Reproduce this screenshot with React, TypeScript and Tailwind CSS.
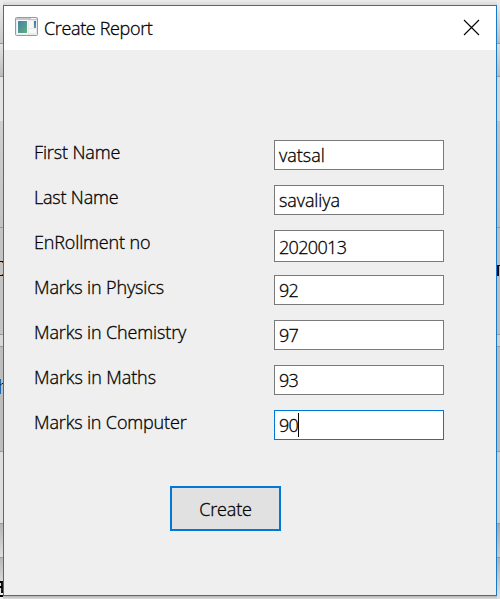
import React from 'react';

type Field = {
  label: string;
  value: string;
  labelClass: string;
  valueClass: string;
  boxClass: string;
};

const fields: Field[] = [
  { label: 'First Name', value: 'vatsal', labelClass: 'tracking-[-0.12px]', valueClass: '', boxClass: 'h-[30px] border-[#7a7a7a]' },
  { label: 'Last Name', value: 'savaliya', labelClass: 'tracking-[-0.2px]', valueClass: 'tracking-[-0.1px]', boxClass: 'h-[30px] border-[#7a7a7a]' },
  { label: 'EnRollment no', value: '2020013', labelClass: 'tracking-[-0.15px]', valueClass: 'pt-0.5 tracking-[-0.65px]', boxClass: 'h-8 border-[#7a7a7a]' },
  { label: 'Marks in Physics', value: '92', labelClass: 'tracking-[-0.13px]', valueClass: 'tracking-[-0.7px]', boxClass: 'h-[30px] border-[#7a7a7a]' },
  { label: 'Marks in Chemistry', value: '97', labelClass: 'tracking-[-0.13px]', valueClass: 'tracking-[-0.7px]', boxClass: 'h-[30px] border-[#7a7a7a]' },
  { label: 'Marks in Maths', value: '93', labelClass: 'tracking-[-0.1px]', valueClass: 'tracking-[-0.7px]', boxClass: 'h-[30px] border-[#7a7a7a]' },
  { label: 'Marks in Computer', value: '90', labelClass: 'tracking-[-0.15px]', valueClass: 'tracking-[-0.7px]', boxClass: 'h-[30px] border-[#0078d7]' },
];

function WindowIcon() {
  return (
    <svg width="23" height="19" viewBox="0 0 23 19" className="relative -top-0.5 shrink-0">
      <defs>
        <linearGradient id="pane" x1="0" y1="0" x2="1" y2="1">
          <stop offset="0" stopColor="#4682a6" />
          <stop offset="1" stopColor="#5fae7c" />
        </linearGradient>
        <linearGradient id="side" x1="0" y1="0" x2="0" y2="1">
          <stop offset="0" stopColor="#3f72b0" />
          <stop offset="1" stopColor="#5aa886" />
        </linearGradient>
      </defs>
      <rect x="0.5" y="0.5" width="22" height="18" rx="1" fill="#e9ebee" stroke="#969ba3" />
      <rect x="1" y="1" width="21" height="2" fill="#c3c8d0" />
      <rect x="16" y="1" width="5" height="1" fill="#f4f4f4" />
      <rect x="2" y="3" width="11" height="14" fill="#fafafa" />
      <rect x="3" y="4" width="9" height="12" fill="url(#pane)" />
      <rect x="14" y="4" width="4" height="7" fill="#f8f8f4" />
      <rect x="14" y="12" width="7" height="4" fill="#f8f8f4" />
      <rect x="19" y="4" width="2" height="7" fill="url(#side)" />
    </svg>
  );
}

function LeftStrip() {
  return (
    <div className="flex h-full w-[3px] shrink-0 flex-col overflow-hidden">
      <div className="h-[43px] shrink-0 bg-linear-to-b from-[#eeeeee] to-[#c9c9c9]" />
      <div className="h-[34px] shrink-0 border-y border-[#999] bg-linear-to-b from-[#e4e4e4] to-[#bcbcbc]" />
      <div className="h-[44px] shrink-0 bg-[#e4e4e4]" />
      <div className="h-[106px] shrink-0 bg-linear-to-b from-[#cfcfcf] to-[#c3c3c3]" />
      <div className="h-[108px] shrink-0 border-y border-[#999] bg-[#c4c4c4] pt-[33px]">
        <svg width="3" height="15" viewBox="0 0 3 15" className="block">
          <path d="M0 .5H3M0 14.5H3" stroke="#000" />
          <path d="M2 1.5H3M2 13.5H3" stroke="#8a4a10" />
        </svg>
      </div>
      <div className="h-[11px] shrink-0 bg-[#d8d8d8]" />
      <div className="h-[106px] shrink-0 border-y border-[#999] bg-[#bdbdbd] pt-[32px]">
        <svg width="3" height="15" viewBox="0 0 3 15" className="block">
          <path d="M.5 0V15" stroke="#1669b5" />
          <path d="M0 6.5L2 4.5H3" stroke="#101010" fill="none" />
        </svg>
      </div>
      <div className="h-[71px] shrink-0 bg-[#dedede]" />
      <div className="h-[35px] shrink-0 border-y border-[#999] bg-linear-to-b from-[#b5b5b5] to-[#dedede]" />
      <div className="h-[41px] shrink-0 bg-linear-to-b from-[#b8b8b8] to-[#f1f1f1] pt-[23px]">
        <svg width="3" height="16" viewBox="0 0 3 16" className="block">
          <path d="M0 1H2V11H3M0 6H2M0 15H3" stroke="#000" strokeWidth="1.8" fill="none" />
        </svg>
      </div>
    </div>
  );
}

function RightStrip() {
  return (
    <div className="flex h-full w-[3px] shrink-0 flex-col overflow-hidden">
      <div className="h-[43px] shrink-0 bg-linear-to-b from-[#eeeeee] to-[#bdbdbd]" />
      <div className="h-[34px] shrink-0 border-y border-[#999] bg-linear-to-b from-[#dddddd] to-[#bcbcbc]" />
      <div className="h-[44px] shrink-0 bg-[#d5d5d5]" />
      <div className="h-[106px] shrink-0 bg-linear-to-b from-[#c2c2c2] to-[#bcbcbc]" />
      <div className="h-[108px] shrink-0 border-y border-[#999] bg-[#bebebe] pt-[37px]">
        <div className="h-[11px] border-l-2 border-[#080820] bg-[linear-gradient(#080820,#080820)] bg-[length:100%_1px] bg-no-repeat" />
      </div>
      <div className="h-[11px] shrink-0 bg-[#d0d0d0]" />
      <div className="h-[106px] shrink-0 border-y border-[#999] bg-[#bababa]" />
      <div className="h-[71px] shrink-0 bg-[#cfcfcf]" />
      <div className="h-[35px] shrink-0 border-y border-[#999] bg-linear-to-b from-[#a9a9a9] to-[#cacaca]" />
      <div className="h-[41px] shrink-0 bg-linear-to-b from-[#b0b0b0] to-[#e2e2e2]" />
    </div>
  );
}

export default function App() {
  return (
    <div className="flex h-[599px] w-[500px] overflow-hidden bg-white font-['Open_Sans','Noto_Sans',sans-serif] text-[18px] font-light text-black [-webkit-text-stroke:0.3px_black]">
      <LeftStrip />
      <div className="flex w-[494px] shrink-0 flex-col">
        <div className="h-[5px] shrink-0 bg-linear-to-b from-[#eeeeee] to-[#d8d8d8]" />
        <main className="flex h-[591px] shrink-0 flex-col border border-[#1878ca] bg-[#efefef]">
          <header className="flex h-11 shrink-0 items-center bg-white pr-4 pl-[11px]">
            <WindowIcon />
            <h1 className="ml-1.5 grow leading-6 font-light tracking-[-0.35px]">Create Report</h1>
            <button type="button" aria-label="Close" className="relative -top-px">
              <svg width="17" height="17" viewBox="0 0 17 17" fill="none" stroke="#000" strokeWidth="1.1">
                <path d="M1 1L16 16M16 1L1 16" />
              </svg>
            </button>
          </header>
          <form className="flex flex-col pt-[90px] pl-[30px]">
            {fields.map((f) => (
              <div key={f.label} className="flex h-[45px] items-start">
                <label className={`w-60 shrink-0 leading-[25px] whitespace-nowrap ${f.labelClass}`}>{f.label}</label>
                <div className={`flex w-[170px] items-center border bg-white pl-1 ${f.boxClass}`}>
                  <span className={`leading-7 ${f.valueClass}`}>{f.value}</span>
                  {f.value === '90' && <span className="h-6 w-px bg-black" />}
                </div>
              </div>
            ))}
            <button
              type="button"
              className="mt-[31px] ml-[136px] flex h-[45px] w-[111px] items-center justify-center border-2 border-[#0078d7] bg-[#e1e1e1] pt-px tracking-[-0.2px]"
            >
              Create
            </button>
          </form>
        </main>
        <div className="h-[3px] shrink-0 bg-linear-to-b from-[#b5b5b5] to-[#dddddd]" />
      </div>
      <RightStrip />
    </div>
  );
}
